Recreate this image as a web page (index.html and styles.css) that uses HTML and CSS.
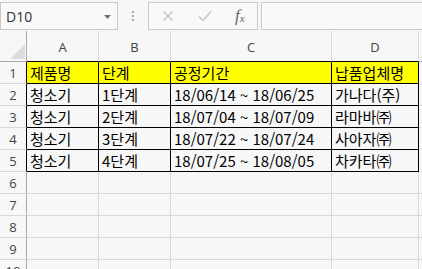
FILE: index.html
```html
<!DOCTYPE html>
<html lang="ko">
<head>
<meta charset="utf-8">
<link rel="stylesheet" href="styles.css">
</head>
<body>
<div class="app">
  <div class="toolbar">
    <div class="namebox">
      <span class="name">D10</span>
      <svg class="caret" width="7" height="4" viewBox="0 0 7 4"><path d="M0 0H7L3.5 4Z" fill="#707070"/></svg>
    </div>
    <div class="dots"><i></i><i></i><i></i></div>
    <div class="fxbox">
      <svg class="ico x" width="12" height="12" viewBox="0 0 12 12"><path d="M1.5 1.5L10.5 10.5M10.5 1.5L1.5 10.5" stroke="#c4c4c4" stroke-width="1.3" fill="none"/></svg>
      <svg class="ico v" width="14" height="12" viewBox="0 0 14 12"><path d="M1 6.5L5 10.5L13 1.5" stroke="#c4c4c4" stroke-width="1.5" fill="none"/></svg>
      <span class="fx">f<sub>x</sub></span>
    </div>
    <div class="formula"></div>
  </div>
  <div class="sheet">
    <div class="hd corner"><span class="tri"></span></div>
    <div class="hd col">A</div>
    <div class="hd col">B</div>
    <div class="hd col">C</div>
    <div class="hd col">D</div>
    <div class="hd last"></div>

    <div class="rh t">1</div>
    <div class="c t y">제품명</div>
    <div class="c t y">단계</div>
    <div class="c t y">공정기간</div>
    <div class="c t y">납품업체명</div>
    <div class="c last"></div>

    <div class="rh t">2</div>
    <div class="c t">청소기</div>
    <div class="c t">1단계</div>
    <div class="c t">18/06/14 ~ 18/06/25</div>
    <div class="c t">가나다(주)</div>
    <div class="c last"></div>

    <div class="rh t">3</div>
    <div class="c t">청소기</div>
    <div class="c t">2단계</div>
    <div class="c t">18/07/04 ~ 18/07/09</div>
    <div class="c t">라마바㈜</div>
    <div class="c last"></div>

    <div class="rh t">4</div>
    <div class="c t">청소기</div>
    <div class="c t">3단계</div>
    <div class="c t">18/07/22 ~ 18/07/24</div>
    <div class="c t">사아자㈜</div>
    <div class="c last"></div>

    <div class="rh t">5</div>
    <div class="c t">청소기</div>
    <div class="c t">4단계</div>
    <div class="c t">18/07/25 ~ 18/08/05</div>
    <div class="c t">차카타㈜</div>
    <div class="c last"></div>

    <div class="rh">6</div><div class="c"></div><div class="c"></div><div class="c"></div><div class="c"></div><div class="c last"></div>
    <div class="rh">7</div><div class="c"></div><div class="c"></div><div class="c"></div><div class="c"></div><div class="c last"></div>
    <div class="rh">8</div><div class="c"></div><div class="c"></div><div class="c"></div><div class="c"></div><div class="c last"></div>
    <div class="rh">9</div><div class="c"></div><div class="c"></div><div class="c"></div><div class="c"></div><div class="c last"></div>
    <div class="rh">10</div><div class="c"></div><div class="c"></div><div class="c"></div><div class="c"></div><div class="c last"></div>
  </div>
</div>
</body>
</html>
```
FILE: styles.css
```css
* { box-sizing: border-box; }
html, body { margin: 0; padding: 0; }
body {
  width: 422px;
  height: 269px;
  overflow: hidden;
  background: #f7f7f7;
  font-family: "Noto Sans CJK KR", "Noto Sans", sans-serif;
}
.app { width: 422px; height: 269px; overflow: hidden; }

.toolbar {
  height: 31px;
  display: flex;
  align-items: flex-start;
  padding-top: 2px;
  background: #f7f7f7;
}
.namebox {
  width: 118px;
  height: 28px;
  border: 1px solid #c8c8c8;
  background: #f9f9f9;
  display: flex;
  align-items: center;
  justify-content: space-between;
  padding: 0 6px 0 5px;
}
.name {
  font-family: "Open Sans", "Noto Sans", sans-serif;
  font-size: 14px;
  color: #333;
}
.caret { margin-top: 1px; }
.dots {
  width: 30px;
  height: 28px;
  display: flex;
  flex-direction: column;
  align-items: center;
  justify-content: center;
  gap: 2px;
}
.dots i {
  display: block;
  width: 2px;
  height: 2px;
  background: #a8a8a8;
}
.fxbox {
  width: 110px;
  height: 28px;
  border: 1px solid #c8c8c8;
  background: #f9f9f9;
  display: flex;
  align-items: center;
  padding-left: 13px;
}
.fxbox .x { margin-right: 24px; }
.fxbox .v { margin-right: 23px; }
.fx {
  font-family: "Liberation Serif", serif;
  font-style: italic;
  font-size: 17px;
  color: #666;
  line-height: 1;
  margin-top: -2px;
}
.fx sub { font-size: 11px; vertical-align: -1px; }
.formula {
  margin-left: 3px;
  flex: 1;
  height: 28px;
  border: 1px solid #c8c8c8;
  border-right: none;
  background: #f9f9f9;
}

.sheet {
  display: grid;
  grid-template-columns: 27px 72px 72px 161px 87px 3px;
  grid-template-rows: 31px repeat(10, 22px);
}
.hd {
  border-right: 1px solid #d8d8d8;
  border-bottom: 1px solid #ababab;
  font-family: "Open Sans", "Noto Sans", sans-serif;
  font-size: 13px;
  color: #444;
  display: flex;
  align-items: center;
  justify-content: center;
  padding-top: 2px;
}
.hd.col { border-bottom-color: #000; }
.corner { position: relative; border-right: 1px solid #ababab; }
.tri {
  position: absolute;
  right: 1px;
  bottom: 2px;
  width: 0;
  height: 0;
  border-left: 15px solid transparent;
  border-bottom: 15px solid #dcdcdc;
}
.hd.last { border-right: none; }
.rh {
  border-right: 1px solid #ababab;
  border-bottom: 1px solid #d8d8d8;
  font-family: "Open Sans", "Noto Sans", sans-serif;
  font-size: 13px;
  color: #444;
  display: flex;
  align-items: center;
  justify-content: center;
}
.rh.t { border-right-color: #000; }
.c {
  border-right: 1px solid #d8d8d8;
  border-bottom: 1px solid #d8d8d8;
  font-size: 15px;
  color: #000;
  white-space: nowrap;
  overflow: hidden;
  padding-left: 3px;
  display: flex;
  align-items: center;
  line-height: 1;
}
.c.t { border-right-color: #000; border-bottom-color: #000; }
.c.y { background: #ffff00; }
.c.last { border-right: none; }
```
